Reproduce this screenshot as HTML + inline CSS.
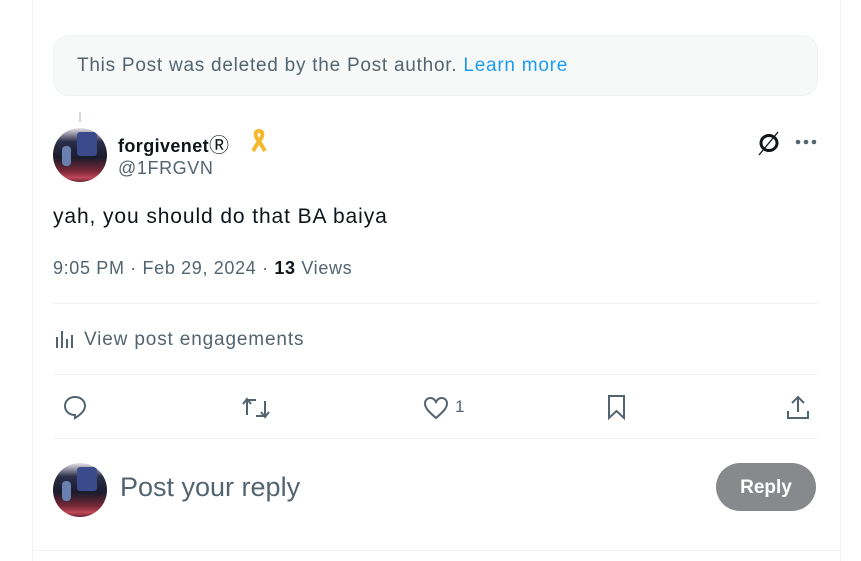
<!DOCTYPE html>
<html><head><style>
body{margin:0;width:861px;height:561px;background:#fff;font-family:"Liberation Sans",sans-serif;position:relative;overflow:hidden;color:#0f1419}
.a{position:absolute;white-space:nowrap}
.vl{position:absolute;top:0;width:1px;height:561px;background:#eff3f4}
.hl{position:absolute;left:53px;width:765px;height:1px;background:#eff3f4}
.av{position:absolute;width:54px;height:54px;border-radius:50%;background:linear-gradient(180deg,#e8e4ea 0,#2a2e48 25%,#1a1c2c 55%,#7a2838 80%,#c04858 92%,#6a2030 100%);overflow:hidden}
.av:before{content:"";position:absolute;left:24px;top:4px;width:20px;height:24px;background:#3a4a8a;border-radius:3px}
.av:after{content:"";position:absolute;left:9px;top:18px;width:9px;height:20px;background:#6a80b0;border-radius:4px}
.g{color:#536471}
svg{position:absolute;fill:none;stroke:#536471;stroke-width:2}
</style></head><body>
<div class="vl" style="left:32px"></div><div class="vl" style="left:840px"></div>
<div class="a" style="left:53px;top:35px;width:763px;height:59px;background:#f7f9f9;border:1px solid #eff3f4;border-radius:16px"></div>
<div class="a g" style="left:77px;top:55px;font-size:19px;letter-spacing:0.75px">This Post was deleted by the Post author. <span style="color:#1d9bf0">Learn more</span></div>
<div class="a" style="left:79px;top:112px;width:2px;height:10px;background:#cfd9de"></div>
<div class="av" style="left:53px;top:128px"></div>
<div class="a" style="left:118px;top:129px;font-size:18px;font-weight:bold;letter-spacing:0.4px">forgivenet<span style="font-weight:normal;font-size:20px">Ⓡ</span></div>
<svg style="left:249px;top:128px;stroke:#f5b82e;stroke-width:4" width="20" height="26" viewBox="0 0 20 26"><path d="M10 13c-4-4-5-10 0-10s4 6 0 10zM10 13l-6 10M10 13l6 10"/></svg>
<div class="a g" style="left:118px;top:158px;font-size:18px;letter-spacing:0.6px">@1FRGVN</div>
<svg style="left:755px;top:129px" width="28" height="28" viewBox="0 0 28 28"><ellipse cx="14" cy="14" rx="8" ry="7.5" stroke="#0f1419" stroke-width="3"/><path d="M23 3L4 26" stroke="#0f1419" stroke-width="1.3"/></svg>
<svg style="left:794px;top:138px;fill:#536471;stroke:none" width="24" height="8" viewBox="0 0 24 8"><circle cx="4" cy="4" r="2.3"/><circle cx="12" cy="4" r="2.3"/><circle cx="20" cy="4" r="2.3"/></svg>
<div class="a" style="left:53px;top:205px;font-size:21px;letter-spacing:0.9px">yah, you should do that BA baiya</div>
<div class="a g" style="left:53px;top:258px;font-size:18px;letter-spacing:0.65px">9:05 PM · Feb 29, 2024 · <b style="color:#0f1419">13</b> Views</div>
<div class="hl" style="top:303px"></div>
<svg style="left:54px;top:329px" width="22" height="20" viewBox="0 0 22 20"><path d="M3 8v11M8 2v17M13 10v9M18 6v13"/></svg>
<div class="a g" style="left:84px;top:329px;font-size:19px;letter-spacing:0.85px">View post engagements</div>
<div class="hl" style="top:374px"></div>
<svg style="left:61px;top:394px" width="28" height="28" viewBox="0 0 28 28"><path d="M14 3c6 0 10 4 10 9 0 5-5 9-10 12v-3c-6 0-10-4-10-9s4-9 10-9z"/></svg>
<svg style="left:241px;top:395px" width="30" height="26" viewBox="0 0 30 26"><path d="M6 20V5h9M2 9l4-5 4 5M24 6v15h-9M20 17l4 5 4-5"/></svg>
<svg style="left:422px;top:395px" width="28" height="26" viewBox="0 0 28 26"><path d="M14 23C7 17 3 13 3 8.5 3 5 5.5 3 8.5 3 11 3 13 5 14 7c1-2 3-4 5.5-4 3 0 5.5 2 5.5 5.5 0 4.5-4 8.5-11 14.5z"/></svg>
<div class="a g" style="left:455px;top:397px;font-size:17px">1</div>
<svg style="left:604px;top:393px" width="26" height="28" viewBox="0 0 26 28"><path d="M5 3h15v22l-7.5-7-7.5 7z"/></svg>
<svg style="left:785px;top:393px" width="26" height="28" viewBox="0 0 26 28"><path d="M13 4v15M7 10l6-6 6 6M3 18v7h20v-7"/></svg>
<div class="hl" style="top:438px"></div>
<div class="av" style="left:53px;top:463px"></div>
<div class="a" style="left:120px;top:472px;font-size:27px;color:#536471">Post your reply</div>
<div class="a" style="left:716px;top:463px;width:100px;height:48px;border-radius:24px;background:#87898c;color:#fff;font-weight:bold;font-size:19px;line-height:50px;text-align:center">Reply</div>
<div class="a" style="left:32px;top:550px;width:808px;height:1px;background:#eff3f4"></div>
</body></html>
